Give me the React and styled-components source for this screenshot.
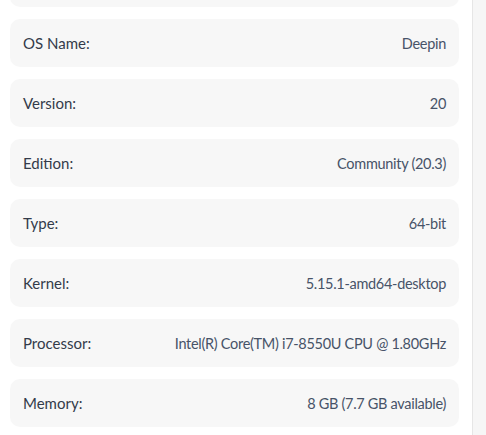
import React from 'react';
import styled, { createGlobalStyle } from 'styled-components';

const Global = createGlobalStyle`
  html, body {
    margin: 0;
    padding: 0;
    background: #ffffff;
  }
  body {
    font-family: Lato, 'Noto Sans', sans-serif;
  }
`;

const Window = styled.div`
  display: flex;
  height: 435px;
  overflow: hidden;
`;

const Content = styled.div`
  flex: 1;
  overflow: hidden;
  padding: 0 13px 0 10px;
`;

const List = styled.div`
  display: flex;
  flex-direction: column;
  gap: 12px;
  margin-top: -41px;
`;

const Card = styled.div`
  display: flex;
  align-items: center;
  justify-content: space-between;
  height: 48px;
  padding: 0 13px;
  border-radius: 10px;
  background: #f7f7f7;
`;

const Label = styled.span`
  color: #333b4a;
  font-size: 15px;
`;

const Value = styled.span`
  color: #475368;
  font-size: 14.5px;
  letter-spacing: -0.3px;
`;

const Track = styled.div`
  width: 13px;
  background: #f6f6f6;
  border-left: 1px solid #e6e6e6;
`;

const rows = [
  ['OS Name:', 'Deepin'],
  ['Version:', '20'],
  ['Edition:', 'Community (20.3)'],
  ['Type:', '64-bit'],
  ['Kernel:', '5.15.1-amd64-desktop'],
  ['Processor:', 'Intel(R) Core(TM) i7-8550U CPU @ 1.80GHz'],
  ['Memory:', '8 GB (7.7 GB available)'],
];

export default function App() {
  return (
    <>
      <Global />
      <Window>
        <Content>
          <List>
            <Card />
            {rows.map(([label, value]) => (
              <Card key={label}>
                <Label>{label}</Label>
                <Value>{value}</Value>
              </Card>
            ))}
          </List>
        </Content>
        <Track />
      </Window>
    </>
  );
}
